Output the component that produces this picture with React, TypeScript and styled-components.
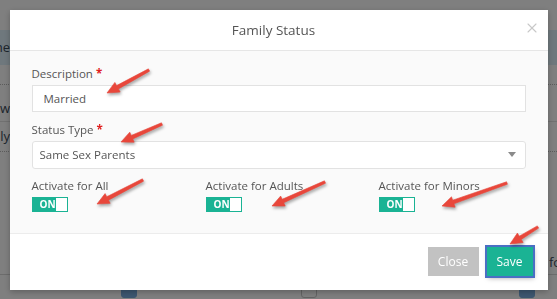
import React from "react";
import styled, { createGlobalStyle } from "styled-components";
import { X } from "lucide-react";

const GlobalStyle = createGlobalStyle`
  html, body {
    margin: 0;
    padding: 0;
    width: 557px;
    height: 299px;
    overflow: hidden;
    font-family: "Open Sans", "Liberation Sans", sans-serif;
  }
  * { box-sizing: border-box; }
`;

/* page behind the modal */
const Page = styled.div`
  width: 557px;
  height: 299px;
  overflow: hidden;
  background: #ffffff;
  padding-top: 30px;
  display: flex;
  flex-direction: column;
  font-size: 12px;
  color: #3a4a5a;
`;

const PageRow = styled.div<{ $band?: boolean; $h: number; $line?: string; $low?: boolean }>`
  height: ${(p) => p.$h}px;
  flex-shrink: 0;
  display: flex;
  align-items: ${(p) => (p.$low ? "flex-end" : "center")};
  padding-bottom: ${(p) => (p.$low ? "4px" : "0")};
  justify-content: space-between;
  background: ${(p) => (p.$band ? "#dff1fa" : "transparent")};
  border-bottom: ${(p) => p.$line || "none"};
`;

const EdgeText = styled.div`
  width: 10px;
  display: flex;
  justify-content: flex-end;
  white-space: nowrap;
  font-size: 13px;
  line-height: 17px;
`;

const RightText = styled.div`
  width: 8px;
  white-space: nowrap;
  overflow: hidden;
  font-size: 13px;
`;

const CheckRow = styled.div`
  display: grid;
  grid-template-columns: 180px 218px 16px;
  padding-left: 121px;
  margin-top: 7px;
`;

const PageCheck = styled.div<{ $on?: boolean }>`
  width: 16px;
  height: 16px;
  border-radius: 3px;
  background: ${(p) => (p.$on ? "#7aaee0" : "#ffffff")};
  border: 1px solid ${(p) => (p.$on ? "#7aaee0" : "#c8c8c8")};
`;

const Backdrop = styled.div`
  position: fixed;
  inset: 0;
  background: rgba(0, 0, 0, 0.5);
  display: flex;
  align-items: center;
  justify-content: center;
`;

const Modal = styled.div`
  width: 538px;
  height: 280px;
  background: #ffffff;
  display: flex;
  flex-direction: column;
  box-shadow: 0 2px 6px rgba(0, 0, 0, 0.25);
`;

const Header = styled.div`
  height: 41px;
  border-bottom: 1px solid #e6e6e6;
  display: flex;
  align-items: center;
  justify-content: center;
  position: relative;
`;

const Title = styled.h4`
  margin: 0;
  font-size: 13.5px;
  font-weight: 400;
  color: #555555;
  padding: 1px 10px 0 0;
`;

const CloseX = styled.span`
  position: absolute;
  right: 8px;
  top: 10px;
  color: #c8c8c8;
  display: flex;
`;

const Body = styled.div`
  flex: 1;
  background: #fafafa;
  border-bottom: 1px solid #ececec;
  padding: 14px 22px 0;
  display: flex;
  flex-direction: column;
`;

const Label = styled.label`
  display: block;
  font-size: 11.5px;
  line-height: 17px;
  color: #555555;
  margin-bottom: 3px;
`;

const Req = styled.span`
  color: #e02020;
  font-weight: 700;
`;

const TextInput = styled.input`
  width: 100%;
  height: 27px;
  border: 1px solid #e2e2e2;
  background: #ffffff;
  padding: 0 11px;
  font-family: inherit;
  font-size: 11.5px;
  color: #555555;
  margin-bottom: 9px;
  outline: none;
`;

const SelectBox = styled.div`
  height: 28px;
  border: 1px solid #e2e2e2;
  border-radius: 3px;
  background: #ffffff;
  padding: 0 7px;
  display: flex;
  align-items: center;
  justify-content: space-between;
  font-size: 11.5px;
  color: #555555;
  margin-bottom: 8px;
`;

const Caret = styled.span`
  width: 0;
  height: 0;
  border-left: 4px solid transparent;
  border-right: 4px solid transparent;
  border-top: 5px solid #8a8a8a;
  margin-right: 2px;
`;

const ToggleGrid = styled.div`
  display: grid;
  grid-template-columns: 174px 173px 1fr;
`;

const Toggle = styled.div`
  width: 36px;
  height: 15px;
  background: #1ab394;
  border: 1px solid #1ab394;
  display: flex;
  align-items: center;
  justify-content: space-between;
`;

const ToggleText = styled.span`
  color: #ffffff;
  font-size: 10px;
  font-weight: 700;
  padding-left: 7px;
  line-height: 13px;
`;

const Knob = styled.span`
  width: 12px;
  height: 13px;
  background: #ffffff;
`;

const Footer = styled.div`
  height: 56px;
  display: flex;
  align-items: center;
  justify-content: flex-end;
  gap: 8px;
  padding: 0 15px 1px 0;
`;

const Button = styled.button<{ $primary?: boolean }>`
  height: 29px;
  width: ${(p) => (p.$primary ? "46px" : "51px")};
  border: none;
  font-family: inherit;
  font-size: 12px;
  color: #ffffff;
  background: ${(p) => (p.$primary ? "#1ab394" : "#c2c2c2")};
  box-shadow: ${(p) =>
    p.$primary ? "0 0 0 2px #4a6fc4, 1px 2px 5px rgba(0,0,0,0.35)" : "none"};
`;

const Annot = styled.svg`
  position: fixed;
  left: 0;
  top: 0;
  pointer-events: none;
  filter: drop-shadow(1px 2px 1.5px rgba(0, 0, 0, 0.35));
`;

type Pt = [number, number];

function Arrow({ from, to }: { from: Pt; to: Pt }) {
  const dx = to[0] - from[0];
  const dy = to[1] - from[1];
  const len = Math.hypot(dx, dy);
  const ux = dx / len;
  const uy = dy / len;
  const nx = -uy;
  const ny = ux;
  const headLen = 12;
  const bx = to[0] - ux * headLen;
  const by = to[1] - uy * headLen;
  const pts: Pt[] = [
    [from[0] + nx * 1.3, from[1] + ny * 1.3],
    [bx + nx * 1.9, by + ny * 1.9],
    [bx + nx * 5.5, by + ny * 5.5],
    [to[0], to[1]],
    [bx - nx * 5.5, by - ny * 5.5],
    [bx - nx * 1.9, by - ny * 1.9],
    [from[0] - nx * 1.3, from[1] - ny * 1.3],
  ];
  return (
    <polygon
      points={pts.map((p) => p.join(",")).join(" ")}
      fill="#e8473b"
      strokeLinejoin="round"
      stroke="#e8473b"
      strokeWidth={0.6}
    />
  );
}

const arrows: { from: Pt; to: Pt }[] = [
  { from: [149, 70], to: [107, 93] },
  { from: [162, 124], to: [121, 142] },
  { from: [143, 180], to: [97, 204] },
  { from: [325, 182], to: [272, 206] },
  { from: [507, 183], to: [442, 206] },
  { from: [538, 227], to: [510, 244] },
];

const toggles = ["Activate for All", "Activate for Adults", "Activate for Minors"];

export default function App() {
  return (
    <>
      <GlobalStyle />
      <Page>
        <PageRow $band $h={35}>
          <EdgeText>Name</EdgeText>
        </PageRow>
        <PageRow $h={20} $line="1px dotted #b8b8b8" />
        <PageRow $h={37} $low $line="1px solid #e2e2e2">
          <EdgeText>Show</EdgeText>
        </PageRow>
        <PageRow $h={30} $line="1px dotted #b8b8b8">
          <EdgeText>Family</EdgeText>
        </PageRow>
        <PageRow $h={98} />
        <PageRow $h={25} $line="1px solid #d8d8d8">
          <span />
          <RightText>for</RightText>
        </PageRow>
        <CheckRow>
          <PageCheck $on />
          <PageCheck />
          <PageCheck $on />
        </CheckRow>
      </Page>
      <Backdrop>
        <Modal>
          <Header>
            <Title>Family Status</Title>
            <CloseX>
              <X size={16} strokeWidth={1.6} />
            </CloseX>
          </Header>
          <Body>
            <Label>
              Description <Req>*</Req>
            </Label>
            <TextInput defaultValue="Married" />
            <Label>
              Status Type <Req>*</Req>
            </Label>
            <SelectBox>
              <span>Same Sex Parents</span>
              <Caret />
            </SelectBox>
            <ToggleGrid>
              {toggles.map((t) => (
                <div key={t}>
                  <Label>{t}</Label>
                  <Toggle>
                    <ToggleText>ON</ToggleText>
                    <Knob />
                  </Toggle>
                </div>
              ))}
            </ToggleGrid>
          </Body>
          <Footer>
            <Button>Close</Button>
            <Button $primary>Save</Button>
          </Footer>
        </Modal>
      </Backdrop>
      <Annot width={557} height={299} viewBox="0 0 557 299">
        {arrows.map((a, i) => (
          <Arrow key={i} from={a.from} to={a.to} />
        ))}
      </Annot>
    </>
  );
}
